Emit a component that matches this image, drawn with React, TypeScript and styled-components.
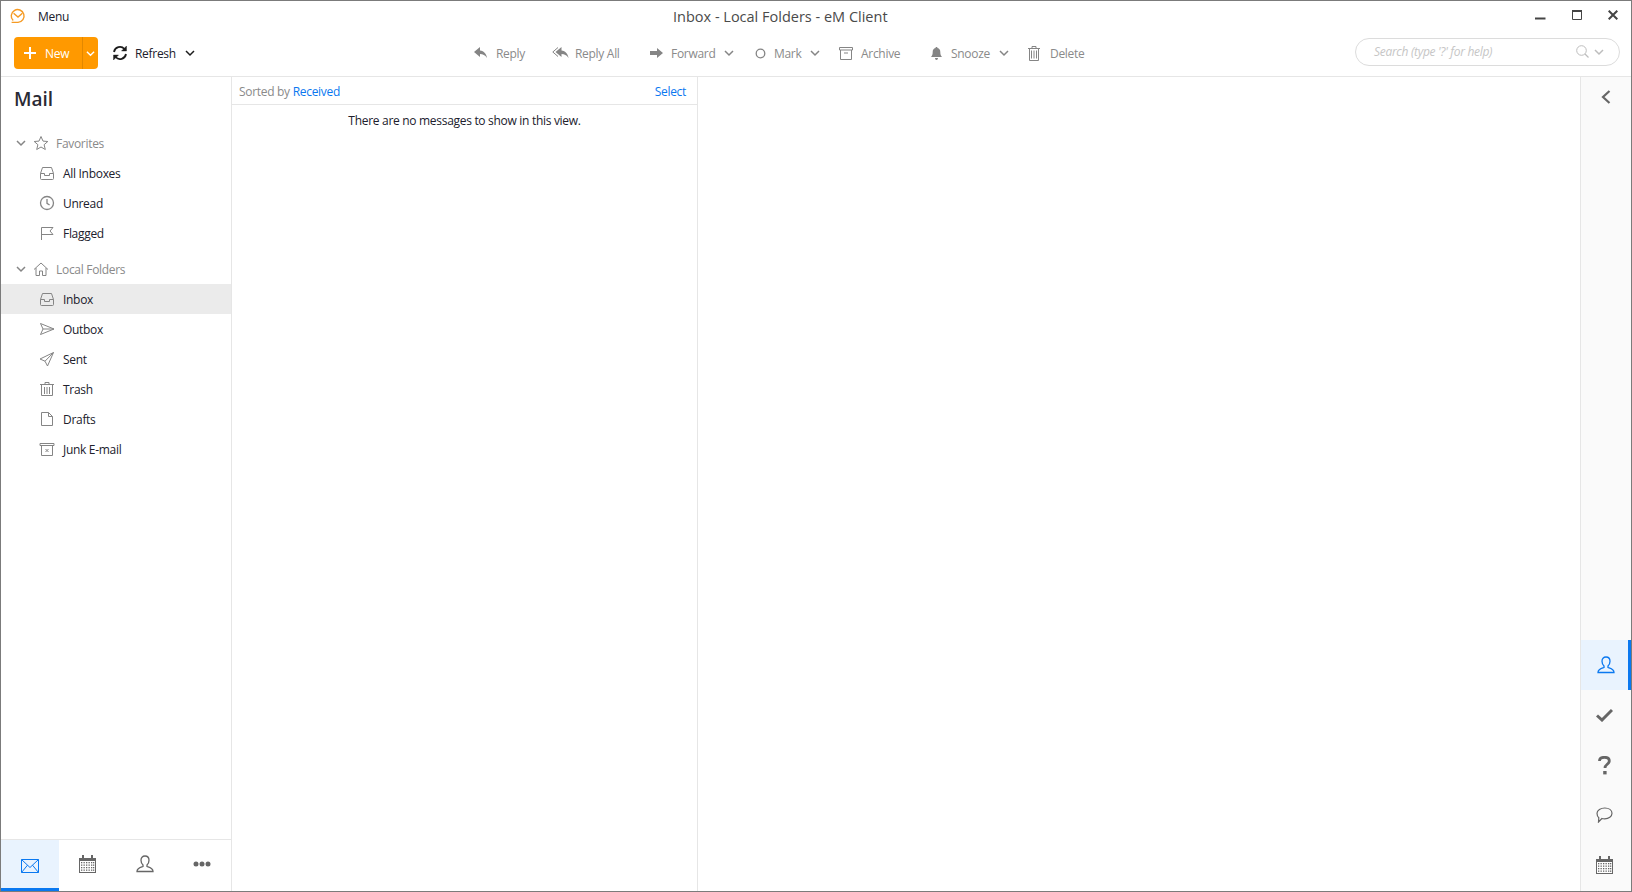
import React from 'react';
import styled, {createGlobalStyle} from 'styled-components';

const GlobalStyle = createGlobalStyle`
html, body, #root {
    margin: 0;
    height: 100%;
}
body {
    overflow: hidden;
    background: #fff;
    font-family: "Open Sans", "Noto Sans", sans-serif;
    font-size: 12px;
    letter-spacing: -0.3px;
    color: #20202c;
}
`;

const Win = styled.div`
box-sizing: border-box;
width: 1632px;
height: 892px;
border: 1px solid #7b7b7b;
display: flex;
flex-direction: column;
background: #fff;
`;

const Icon = styled.svg`
display: block;
flex: none;
`;

const TitleBar = styled.div`
height: 30px;
flex: none;
display: flex;
align-items: center;
position: relative;
`;

const MenuGroup = styled.div`
width: 672px;
flex: none;
display: flex;
align-items: center;
padding-left: 9px;
box-sizing: border-box;
gap: 12px;
`;

const Title = styled.div`
font-size: 14.5px;
letter-spacing: 0;
color: #4a4a4a;
`;

const WinButtons = styled.div`
margin-left: auto;
display: flex;
align-items: center;
gap: 26px;
padding-right: 13px;
padding-bottom: 2px;
`;

const Toolbar = styled.div`
height: 46px;
flex: none;
display: flex;
align-items: center;
border-bottom: 1px solid #e6e6e6;
padding: 0 0 1px 13px;
box-sizing: border-box;
`;

const LeftTools = styled.div`
width: 460px;
flex: none;
display: flex;
align-items: center;
`;

const NewButton = styled.div`
width: 84px;
height: 32px;
background: #ff9900;
border-radius: 4px;
display: flex;
color: #fff;
`;

const NewMain = styled.div`
width: 69px;
display: flex;
align-items: center;
padding-left: 9px;
gap: 8px;
box-sizing: border-box;
border-right: 1px solid #e28800;
`;

const NewArrow = styled.div`
flex: 1;
display: flex;
align-items: center;
justify-content: center;
`;

const RefreshButton = styled.div`
display: flex;
align-items: center;
margin-left: 14px;
gap: 7px;
color: #20202c;
`;

const RefreshMenu = styled.span`
display: flex;
margin-left: 2px;
`;

const Actions = styled.div`
display: flex;
align-items: center;
`;

const Action = styled.div<{$width: number}>`
width: ${(p) => p.$width}px;
display: flex;
align-items: center;
color: #8a8a8a;
`;

const ActionIcon = styled.span<{$width: number}>`
width: ${(p) => p.$width}px;
display: flex;
align-items: center;
flex: none;
`;

const ActionChevron = styled.span`
display: flex;
margin-left: 9px;
`;

const Search = styled.div`
box-sizing: border-box;
margin-left: auto;
margin-right: 11px;
margin-bottom: 3px;
width: 265px;
height: 28px;
border: 1px solid #dcdcdc;
border-radius: 14px;
display: flex;
align-items: center;
padding: 0 15px 0 18px;
font-style: italic;
color: #c6c6c6;
`;

const SearchIcons = styled.div`
margin-left: auto;
display: flex;
align-items: center;
gap: 5px;
`;

const Body = styled.div`
flex: 1;
display: flex;
min-height: 0;
`;

const Sidebar = styled.div`
width: 230px;
flex: none;
display: flex;
flex-direction: column;
border-right: 1px solid #e6e6e6;
`;

const Heading = styled.div`
font-size: 19px;
font-weight: 600;
letter-spacing: 0;
line-height: 28px;
color: #2a2a34;
padding: 8px 0 0 13px;
margin-bottom: 15px;
`;

const Tree = styled.div`
flex: 1;
`;

const GroupRow = styled.div`
height: 30px;
display: flex;
align-items: center;
color: #8a8a8a;
padding-left: 15px;
gap: 7px;
`;

const FolderRow = styled.div<{$active?: boolean}>`
height: 30px;
box-sizing: border-box;
display: flex;
align-items: center;
padding-left: 38px;
gap: 8px;
background: ${(p) => (p.$active ? '#ebebeb' : 'transparent')};
`;

const FolderGroup = styled.div`
margin-bottom: 6px;
`;

const BottomTabs = styled.div`
height: 51px;
flex: none;
display: flex;
border-top: 1px solid #e6e6e6;
`;

const BottomTab = styled.div<{$active?: boolean}>`
width: 58px;
box-sizing: border-box;
display: flex;
align-items: center;
justify-content: center;
background: ${(p) => (p.$active ? '#e9f3fe' : 'transparent')};
border-bottom: 3px solid ${(p) => (p.$active ? '#0a78f0' : 'transparent')};
padding-top: ${(p) => (p.$active ? '3px' : '0')};
`;

const MessageList = styled.div`
width: 465px;
flex: none;
border-right: 1px solid #e6e6e6;
`;

const ListHeader = styled.div`
height: 28px;
display: flex;
align-items: center;
justify-content: space-between;
padding: 1px 11px 0 7px;
box-sizing: border-box;
border-bottom: 1px solid #e6e6e6;
color: #8a8a8a;
`;

const Link = styled.span`
color: #0a78f0;
`;

const EmptyText = styled.div`
text-align: center;
line-height: 30px;
padding-top: 1px;
color: #20202c;
`;

const Reader = styled.div`
flex: 1;
`;

const Rail = styled.div`
width: 50px;
flex: none;
display: flex;
flex-direction: column;
background: #fafafa;
border-left: 1px solid #e6e6e6;
padding-bottom: 1px;
`;

const RailTop = styled.div`
height: 40px;
display: flex;
align-items: center;
justify-content: center;
flex: none;
`;

const RailSpacer = styled.div`
flex: 1;
`;

const RailItem = styled.div<{$active?: boolean}>`
height: 50px;
flex: none;
box-sizing: border-box;
display: flex;
align-items: center;
justify-content: center;
background: ${(p) => (p.$active ? '#e9f3fe' : 'transparent')};
border-right: 3px solid ${(p) => (p.$active ? '#0a78f0' : 'transparent')};
padding-left: ${(p) => (p.$active ? '3px' : '0')};
`;

const GREY = '#858585';
const DARK = '#666666';
const BLUE = '#0a78f0';

const Svg = ({children}: {children: React.ReactNode}) => (
    <Icon width={16} height={16} viewBox='0 0 16 16' fill='none' stroke={GREY} strokeWidth={1}>
        {children}
    </Icon>
);

const Chevron = ({color = GREY, size = 10}: {color?: string; size?: number}) => (
    <Icon width={size} height={size} viewBox='0 0 10 10' fill='none'>
        <path d='M1 3l4 4 4-4' stroke={color} strokeWidth={1.500}/>
    </Icon>
);

const Logo = () => (
    <Icon width={16} height={16} viewBox='0 0 16 16' fill='none' stroke='#f59a23' strokeWidth={1.400}>
        <path d='M3.200 12.600A6.400 6.400 0 1 1 8 14.400H1.600'/>
        <path d='M3.600 5.200L8 9l4.400-3.800'/>
    </Icon>
);

const Inbox = () => (
    <Svg>
        <path d='M3.500 2.500h9l2 6v5a1 1 0 0 1-1 1h-11a1 1 0 0 1-1-1v-5z'/>
        <path d='M1.500 8.500h4v2h5v-2h4'/>
    </Svg>
);

const Clock = () => (
    <Svg>
        <circle cx={8} cy={8} r={6.500} strokeWidth={1.300}/>
        <path d='M8 4v4.400l2.600 1.600' strokeWidth={1.300}/>
    </Svg>
);

const Flag = () => (
    <Svg>
        <path d='M2.500 15V2.500h11.500l-3 3.500 3 3.500H2.500'/>
    </Svg>
);

const Outbox = () => (
    <Svg>
        <path d='M1.500 2.500L15 8 1.500 13.500 4 8z'/>
        <path d='M4 8h11'/>
    </Svg>
);

const Sent = () => (
    <Svg>
        <path d='M14.500 1.500L1 8l5 2.200L8.500 15z'/>
        <path d='M14.500 1.500L6 10.200'/>
    </Svg>
);

const Trash = () => (
    <Svg>
        <path d='M1 3.500h14M6 3.500V1.500h4v2M2.500 3.500v11h11v-11M5.500 6v7M8 6v7M10.500 6v7'/>
    </Svg>
);

const Draft = () => (
    <Svg>
        <path d='M2.500 1.500h7l4 4v9h-11zM9.500 1.500v4h4'/>
    </Svg>
);

const Junk = () => (
    <Svg>
        <path d='M1 2.500h14v2H1zM2.500 4.500v10h11v-10M6.500 8l3 3M9.500 8l-3 3'/>
    </Svg>
);

const Star = () => (
    <Svg>
        <path d='M8 1.500l2 4.600 4.800.4-3.700 3.200 1.200 4.800L8 12l-4.300 2.500 1.200-4.800L1.200 6.500 6 6.100z'/>
    </Svg>
);

const House = () => (
    <Svg>
        <path d='M1 8.500L8 2l7 6.500M3 7v7.500h3.500V10h3v4.500H13V7'/>
    </Svg>
);

const Plus = () => (
    <Icon width={14} height={14} viewBox='0 0 14 14'>
        <path d='M7 1v12M1 7h12' stroke='#fff' strokeWidth={2}/>
    </Icon>
);

const Refresh = () => (
    <Icon width={16} height={16} viewBox='0 0 16 16' fill='none' stroke='#1c1c1c' strokeWidth={1.800}>
        <path d='M2 7a6 6 0 0 1 10.400-3'/>
        <path d='M14 9a6 6 0 0 1-10.400 3'/>
        <path d='M14.500 1v5H9.500z' fill='#1c1c1c' strokeWidth={0.400}/>
        <path d='M1.500 15v-5h5z' fill='#1c1c1c' strokeWidth={0.400}/>
    </Icon>
);

const ReplyIcon = () => (
    <Icon width={14} height={12} viewBox='0 0 14 12'>
        <path d='M6 0L0 5l6 5V7c3 0 5 1 7 4-.5-4-3-7-7-7.500z' fill={GREY}/>
    </Icon>
);

const ReplyAllIcon = () => (
    <Icon width={18} height={12} viewBox='0 0 18 12'>
        <path d='M9.500 0l-6 5 6 5V7c3 0 5 1 7 4-.5-4-3-7-7-7.500z' fill={GREY}/>
        <path d='M6 .5L.8 5 6 9.500' fill='none' stroke={GREY} strokeWidth={1}/>
    </Icon>
);

const ForwardIcon = () => (
    <Icon width={13} height={10} viewBox='0 0 13 10'>
        <path d='M0 3h7V0l6 5-6 5V7H0z' fill={GREY}/>
    </Icon>
);

const MarkIcon = () => (
    <Icon width={11} height={11} viewBox='0 0 11 11' fill='none'>
        <circle cx={5.500} cy={5.500} r={4.300} stroke={GREY} strokeWidth={1.300}/>
    </Icon>
);

const ArchiveIcon = () => (
    <Icon width={14} height={14} viewBox='0 0 14 14' fill='none' stroke={GREY}>
        <path d='M.5 1.500h13v2.500H.5zM1.500 4v9.500h11V4M5 7h4'/>
    </Icon>
);

const BellIcon = () => (
    <Icon width={11} height={13} viewBox='0 0 11 13'>
        <path d='M5.500 0c.6 0 1 .4 1 1C8.500 1.500 9.300 3 9.300 5c0 2.500.6 3.500 1.700 5H0c1.100-1.500 1.700-2.500 1.700-5 0-2 .8-3.500 2.800-4 0-.6.400-1 1-1zM4 11h3c0 1.200-.7 2-1.500 2S4 12.200 4 11z' fill={GREY}/>
    </Icon>
);

const DeleteIcon = () => (
    <Icon width={12} height={15} viewBox='0 0 12 15' fill='none' stroke={GREY}>
        <path d='M0 2.500h12M4 2.500V.5h4v2M1.500 2.500v12h9v-12M3.500 4.500v8M6 4.500v8M8.500 4.500v8'/>
    </Icon>
);

const SearchGlyph = () => (
    <Icon width={13} height={13} viewBox='0 0 13 13' fill='none' stroke='#bdbdbd'>
        <circle cx={5.500} cy={5.500} r={4.800}/>
        <path d='M9 9l3.500 3.500' strokeWidth={1.300}/>
    </Icon>
);

const Minimize = () => (
    <Icon width={11} height={11} viewBox='0 0 11 11'>
        <path d='M0 8.500h10.500' stroke='#444' strokeWidth={2}/>
    </Icon>
);

const Maximize = () => (
    <Icon width={10} height={10} viewBox='0 0 10 10' fill='none'>
        <path d='M.5 1v8.500h9V1z' stroke='#444'/>
        <path d='M0 1h10' stroke='#444' strokeWidth={2}/>
    </Icon>
);

const Close = () => (
    <Icon width={10} height={10} viewBox='0 0 10 10'>
        <path d='M.7.7l8.600 8.600M9.300.7L.7 9.300' stroke='#444' strokeWidth={2}/>
    </Icon>
);

const Envelope = ({color}: {color: string}) => (
    <Icon width={18} height={14} viewBox='0 0 18 14' fill='none' stroke={color}>
        <path d='M.5.500h17v13H.5zM.5.500L9 8.500l8.500-8M.5 13.500L6.500 6.200M17.500 13.500L11.500 6.200'/>
    </Icon>
);

const Calendar = () => (
    <Icon width={17} height={18} viewBox='0 0 17 18'>
        <path d='M3 0h2v3h7V0h2v3h3v15H0V3h3z' fill={DARK}/>
        <rect x={1} y={6} width={15} height={11} fill='#fff'/>
        <g fill={DARK}>
            {[7.500, 10, 12.500, 15].map((y) =>
                [2, 4.500, 7, 9.500, 12, 14].map((x) => (
                    <rect
                        key={`${x}-${y}`}
                        x={x}
                        y={y - 0.500}
                        width={1.300}
                        height={1.300}
                    />
                )),
            )}
        </g>
    </Icon>
);

const Person = ({color}: {color: string}) => (
    <Icon width={18} height={18} viewBox='0 0 18 18' fill='none' stroke={color} strokeWidth={1.300}>
        <path d='M9 1c2.500 0 4 1.800 4 4.300 0 2.200-1 3.800-2 4.700v1.500c2 .9 6 1.700 6 5H1c0-3.300 4-4.100 6-5V10C6 9.100 5 7.500 5 5.300 5 2.800 6.500 1 9 1z'/>
    </Icon>
);

const Dots = () => (
    <Icon width={18} height={6} viewBox='0 0 18 6'>
        <circle cx={3} cy={3} r={2.500} fill={DARK}/>
        <circle cx={9} cy={3} r={2.500} fill={DARK}/>
        <circle cx={15} cy={3} r={2.500} fill={DARK}/>
    </Icon>
);

const Check = () => (
    <Icon width={17} height={14} viewBox='0 0 17 14'>
        <path d='M1 7.500l5 4.500L16 2' fill='none' stroke={DARK} strokeWidth={3}/>
    </Icon>
);

const Question = () => (
    <Icon width={13} height={19} viewBox='0 0 13 19'>
        <path d='M1.500 5c0-2.300 2-3.700 5-3.700s4.800 1.500 4.800 3.600c0 3.400-4.300 3.300-4.300 7' fill='none' stroke={DARK} strokeWidth={2.800}/>
        <rect x={5.200} y={15} width={3.400} height={3.400} fill={DARK}/>
    </Icon>
);

const Bubble = () => (
    <Icon width={17} height={16} viewBox='0 0 17 16' fill='none' stroke={DARK} strokeWidth={1.200}>
        <path d='M8.800 1C12.800 1 16 3 16 6.300s-3.300 5.600-7.300 5.600c-1 0-2-.1-2.800-.4L2.500 15l.3-4.300C1.500 9.600 1 8 1 6.300 1 3 4.800 1 8.800 1z'/>
    </Icon>
);

const ChevronLeft = () => (
    <Icon width={10} height={14} viewBox='0 0 10 14'>
        <path d='M8.500 1L2 7l6.500 6' fill='none' stroke={DARK} strokeWidth={2.200}/>
    </Icon>
);

const favorites = [
    {name: 'All Inboxes', icon: <Inbox/>},
    {name: 'Unread', icon: <Clock/>},
    {name: 'Flagged', icon: <Flag/>},
];

const localFolders = [
    {name: 'Inbox', icon: <Inbox/>, active: true},
    {name: 'Outbox', icon: <Outbox/>},
    {name: 'Sent', icon: <Sent/>},
    {name: 'Trash', icon: <Trash/>},
    {name: 'Drafts', icon: <Draft/>},
    {name: 'Junk E-mail', icon: <Junk/>},
];

const actions = [
    {name: 'Reply', icon: <ReplyIcon/>, iconWidth: 22, width: 78},
    {name: 'Reply All', icon: <ReplyAllIcon/>, iconWidth: 23, width: 98},
    {name: 'Forward', icon: <ForwardIcon/>, iconWidth: 21, width: 105, menu: true},
    {name: 'Mark', icon: <MarkIcon/>, iconWidth: 19, width: 84, menu: true},
    {name: 'Archive', icon: <ArchiveIcon/>, iconWidth: 22, width: 92},
    {name: 'Snooze', icon: <BellIcon/>, iconWidth: 20, width: 97, menu: true},
    {name: 'Delete', icon: <DeleteIcon/>, iconWidth: 22, width: 60},
];

export default function App() {
    return (
        <Win>
            <GlobalStyle/>
            <TitleBar>
                <MenuGroup>
                    <Logo/>
                    <span>{'Menu'}</span>
                </MenuGroup>
                <Title>{'Inbox - Local Folders - eM Client'}</Title>
                <WinButtons>
                    <Minimize/>
                    <Maximize/>
                    <Close/>
                </WinButtons>
            </TitleBar>
            <Toolbar>
                <LeftTools>
                    <NewButton>
                        <NewMain>
                            <Plus/>
                            <span>{'New'}</span>
                        </NewMain>
                        <NewArrow>
                            <Chevron color='#fff' size={9}/>
                        </NewArrow>
                    </NewButton>
                    <RefreshButton>
                        <Refresh/>
                        <span>{'Refresh'}</span>
                        <RefreshMenu><Chevron color='#1c1c1c'/></RefreshMenu>
                    </RefreshButton>
                </LeftTools>
                <Actions>
                    {actions.map((a) => (
                        <Action
                            key={a.name}
                            $width={a.width}
                        >
                            <ActionIcon $width={a.iconWidth}>{a.icon}</ActionIcon>
                            <span>{a.name}</span>
                            {a.menu && <ActionChevron><Chevron/></ActionChevron>}
                        </Action>
                    ))}
                </Actions>
                <Search>
                    <span>{'Search (type \'?\' for help)'}</span>
                    <SearchIcons>
                        <SearchGlyph/>
                        <Chevron color='#bdbdbd'/>
                    </SearchIcons>
                </Search>
            </Toolbar>
            <Body>
                <Sidebar>
                    <Heading>{'Mail'}</Heading>
                    <Tree>
                        <FolderGroup>
                            <GroupRow>
                                <Chevron/>
                                <Star/>
                                <span>{'Favorites'}</span>
                            </GroupRow>
                            {favorites.map((f) => (
                                <FolderRow key={f.name}>
                                    {f.icon}
                                    <span>{f.name}</span>
                                </FolderRow>
                            ))}
                        </FolderGroup>
                        <FolderGroup>
                            <GroupRow>
                                <Chevron/>
                                <House/>
                                <span>{'Local Folders'}</span>
                            </GroupRow>
                            {localFolders.map((f) => (
                                <FolderRow
                                    key={f.name}
                                    $active={f.active}
                                >
                                    {f.icon}
                                    <span>{f.name}</span>
                                </FolderRow>
                            ))}
                        </FolderGroup>
                    </Tree>
                    <BottomTabs>
                        <BottomTab $active={true}><Envelope color={BLUE}/></BottomTab>
                        <BottomTab><Calendar/></BottomTab>
                        <BottomTab><Person color={DARK}/></BottomTab>
                        <BottomTab><Dots/></BottomTab>
                    </BottomTabs>
                </Sidebar>
                <MessageList>
                    <ListHeader>
                        <span>{'Sorted by '}<Link>{'Received'}</Link></span>
                        <Link>{'Select'}</Link>
                    </ListHeader>
                    <EmptyText>{'There are no messages to show in this view.'}</EmptyText>
                </MessageList>
                <Reader/>
                <Rail>
                    <RailTop><ChevronLeft/></RailTop>
                    <RailSpacer/>
                    <RailItem $active={true}><Person color={BLUE}/></RailItem>
                    <RailItem><Check/></RailItem>
                    <RailItem><Question/></RailItem>
                    <RailItem><Bubble/></RailItem>
                    <RailItem><Calendar/></RailItem>
                </Rail>
            </Body>
        </Win>
    );
}
